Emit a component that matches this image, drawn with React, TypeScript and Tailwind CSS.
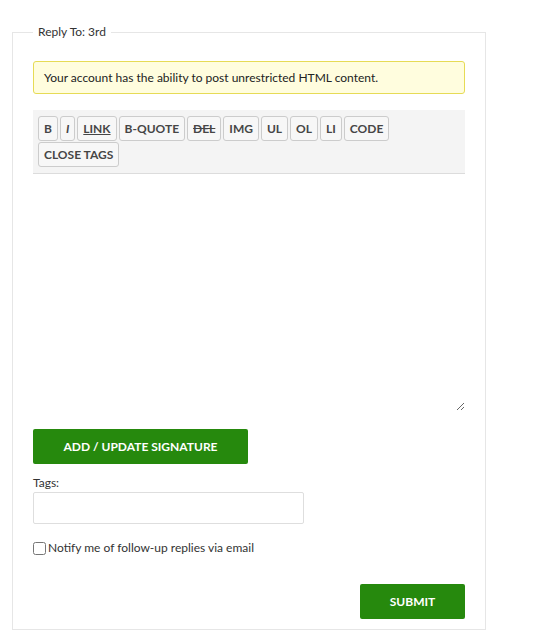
const tags = [
  { label: 'B' },
  { label: 'I', className: 'italic' },
  { label: 'LINK', className: 'underline' },
  { label: 'B-QUOTE' },
  { label: 'DEL', className: 'line-through' },
  { label: 'IMG' },
  { label: 'UL' },
  { label: 'OL' },
  { label: 'LI' },
  { label: 'CODE' },
  { label: 'CLOSE TAGS' },
]

export default function App() {
  return (
    <div className="min-h-[639px] bg-white pl-[12px] pt-[24px] font-['Lato',sans-serif] text-[#333]">
      <fieldset className="w-[474px] border border-[#e6e6e6] px-[20px] pb-[10px]">
        <legend className="px-[5px] text-[12px] leading-[16px]">Reply To: 3rd</legend>

        {/* notice */}
        <div className="mt-[21px] rounded-[3px] border border-[#e6db55] bg-[#fffdde] px-[10px] py-[8px] text-[12px] leading-[15px] text-[#222]">
          Your account has the ability to post unrestricted HTML content.
        </div>

        {/* quicktags toolbar */}
        <div className="mt-[16px] flex flex-wrap gap-x-[2px] gap-y-[1px] border-b border-[#dcdcdc] bg-[#f4f4f4] px-[5px] pt-[6px] pb-[6px]">
          {tags.map(t => (
            <button
              key={t.label}
              className={`h-[25px] rounded-[3px] border border-[#ccc] bg-[#f7f7f7] px-[5px] text-[12px] font-bold leading-none text-[#464646] ${t.className ?? ''}`}
            >
              {t.label}
            </button>
          ))}
        </div>

        <textarea className="block h-[237px] w-full resize-y bg-white outline-none" />

        <button className="mt-[18px] h-[35px] w-[215px] rounded-[2px] bg-[#26890d] text-[12px] font-bold text-white">
          ADD / UPDATE SIGNATURE
        </button>

        <label className="mt-[11px] block text-[12px] leading-[16px]">Tags:</label>
        <input className="mt-[1px] block h-[32px] w-[271px] rounded-[2px] border border-[#dedede] bg-white" />

        <label className="mt-[16px] flex items-center gap-[2px] text-[12px] leading-[16px]">
          <input type="checkbox" className="m-0 h-[13px] w-[13px]" />
          <span>Notify me of follow-up replies via email</span>
        </label>

        <div className="mt-[28px] flex justify-end">
          <button className="h-[35px] w-[105px] rounded-[2px] bg-[#26890d] text-[12px] font-bold text-white">
            SUBMIT
          </button>
        </div>
      </fieldset>
    </div>
  )
}
